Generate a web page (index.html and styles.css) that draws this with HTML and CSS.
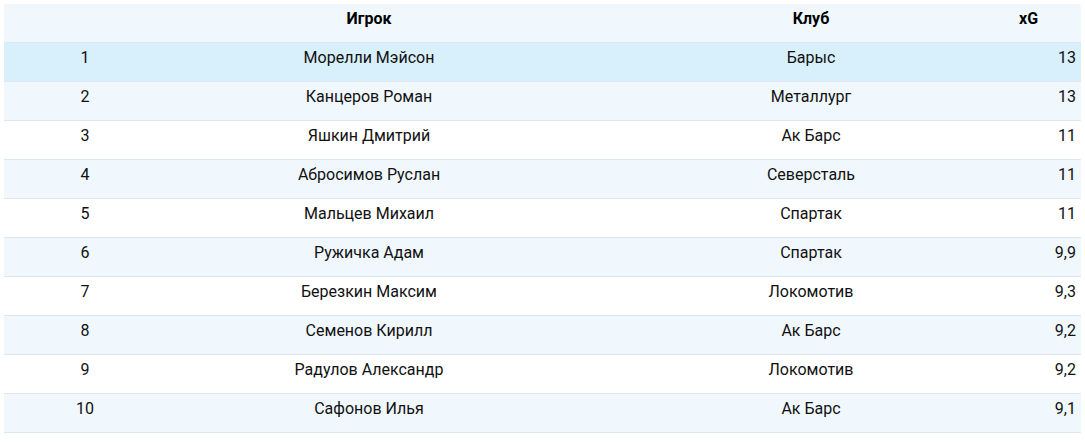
FILE: index.html
```
<!DOCTYPE html>
<html lang="ru">
<head>
<meta charset="utf-8">
<link rel="stylesheet" href="styles.css">
</head>
<body>
<table class="stats">
  <colgroup>
    <col class="c-num"><col class="c-name"><col class="c-club"><col class="c-xg">
  </colgroup>
  <thead>
    <tr><th></th><th>Игрок</th><th class="club">Клуб</th><th class="xg-head">xG</th></tr>
  </thead>
  <tbody>
    <tr class="hover"><td>1</td><td>Морелли Мэйсон</td><td class="club">Барыс</td><td class="xg">13</td></tr>
    <tr><td>2</td><td>Канцеров Роман</td><td class="club">Металлург</td><td class="xg">13</td></tr>
    <tr><td>3</td><td>Яшкин Дмитрий</td><td class="club">Ак Барс</td><td class="xg">11</td></tr>
    <tr><td>4</td><td>Абросимов Руслан</td><td class="club">Северсталь</td><td class="xg">11</td></tr>
    <tr><td>5</td><td>Мальцев Михаил</td><td class="club">Спартак</td><td class="xg">11</td></tr>
    <tr><td>6</td><td>Ружичка Адам</td><td class="club">Спартак</td><td class="xg">9,9</td></tr>
    <tr><td>7</td><td>Березкин Максим</td><td class="club">Локомотив</td><td class="xg">9,3</td></tr>
    <tr><td>8</td><td>Семенов Кирилл</td><td class="club">Ак Барс</td><td class="xg">9,2</td></tr>
    <tr><td>9</td><td>Радулов Александр</td><td class="club">Локомотив</td><td class="xg">9,2</td></tr>
    <tr><td>10</td><td>Сафонов Илья</td><td class="club">Ак Барс</td><td class="xg">9,1</td></tr>
  </tbody>
</table>
</body>
</html>
```
FILE: styles.css
```
html, body {
  margin: 0;
  background: #ffffff;
}
body {
  padding: 4px;
  font-family: Roboto, "Liberation Sans", Arial, sans-serif;
  font-size: 16px;
  color: #111111;
}
.stats {
  width: 1077px;
  border-collapse: collapse;
  table-layout: fixed;
}
.c-num { width: 162px; }
.c-name { width: 406px; }
.c-club { width: 446px; }
.c-xg { width: 63px; }
.stats th,
.stats td {
  height: 38px;
  box-sizing: border-box;
  padding: 5px 0 13px;
  line-height: 20px;
  text-align: center;
  vertical-align: top;
  border-bottom: 1px solid #dbe8f2;
  white-space: nowrap;
}
.stats th {
  font-weight: 700;
  color: #000000;
}
.stats .club {
  padding-left: 32px;
}
.stats thead tr {
  background: #f0f8fe;
}
.stats tbody tr:nth-child(even) {
  background: #f0f8fe;
}
.stats tbody tr.hover {
  background: #d8effc;
}
.stats td.xg {
  text-align: right;
  padding-right: 5px;
}
.stats th.xg-head {
  text-align: left;
  padding-left: 1px;
}
```
